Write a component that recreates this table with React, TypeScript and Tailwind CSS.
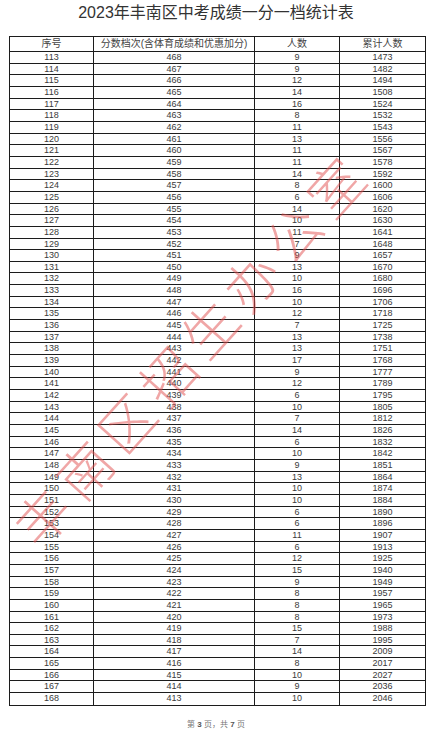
import React from "react";

const counts = [
  9, 9, 12, 14, 16, 8, 11, 13, 11, 11, 14, 8, 6, 14, 10, 11, 7, 9, 13, 10, 16, 10, 12, 7, 13, 13, 17, 9,
  12, 6, 10, 7, 14, 6, 10, 9, 13, 10, 10, 6, 6, 11, 6, 12, 15, 9, 8, 8, 8, 15, 7, 14, 8, 10, 9, 10,
];

const rows = (() => {
  let cum = 1464;
  return counts.map((c, i) => {
    cum += c;
    return { idx: 113 + i, score: 468 - i, count: c, cum };
  });
})();

const font = { fontFamily: '"Liberation Sans", Arial, "Noto Sans CJK SC", sans-serif' };

const wm = "丰南区招生办公室".split("");

export default function App() {
  return (
    <div className="relative w-[432px] h-[731px] bg-white overflow-hidden text-[#333]" style={font}>
      <div className="pt-[3px] text-center text-[16px] leading-[20px] text-[#333]">
        2023年丰南区中考成绩一分一档统计表
      </div>
      <div className="mt-[13px] ml-[9px] w-[417px] border border-[#1c1c1c]">
        <div className="grid grid-cols-[84px_161px_85px_1fr] h-[15px] border-b border-[#1c1c1c] text-[10px] leading-[14px] text-[#444]">
          <div className="border-r border-[#1c1c1c] text-center">序号</div>
          <div className="border-r border-[#1c1c1c] text-center whitespace-nowrap">分数档次(含体育成绩和优惠加分)</div>
          <div className="border-r border-[#1c1c1c] text-center">人数</div>
          <div className="text-center">累计人数</div>
        </div>
        {rows.map((r, i) => (
          <div
            key={r.idx}
            className={
              "grid grid-cols-[84px_161px_85px_1fr] h-[11.67px] text-[9px] leading-[10.5px] text-[#3a3a3a] " +
              (i < rows.length - 1 ? "border-b border-[#1c1c1c]" : "")
            }
          >
            <div className="border-r border-[#1c1c1c] text-center">{r.idx}</div>
            <div className="border-r border-[#1c1c1c] text-center">{r.score}</div>
            <div className="border-r border-[#1c1c1c] text-center">{r.count}</div>
            <div className="text-center">{r.cum}</div>
          </div>
        ))}
      </div>
      <div className="mt-[13px] text-center text-[8px] leading-[12px] text-[#777]">
        第 <span className="font-bold text-[#555]">3</span> 页，共 <span className="font-bold text-[#555]">7</span> 页
      </div>
      {wm.map((ch, i) => {
        const x = 41 + (i * (334 - 41)) / 7;
        const y = 516 - (i * (516 - 186)) / 7;
        return (
          <span
            key={i}
            className="pointer-events-none absolute text-[54px] leading-[54px] font-light text-[rgba(226,78,78,0.5)]"
            style={{
              left: x,
              top: y,
              transform: "translate(-50%, -50%) rotate(-48deg)",
              fontFamily: '"Noto Sans CJK SC", sans-serif',
            }}
          >
            {ch}
          </span>
        );
      })}
    </div>
  );
}
